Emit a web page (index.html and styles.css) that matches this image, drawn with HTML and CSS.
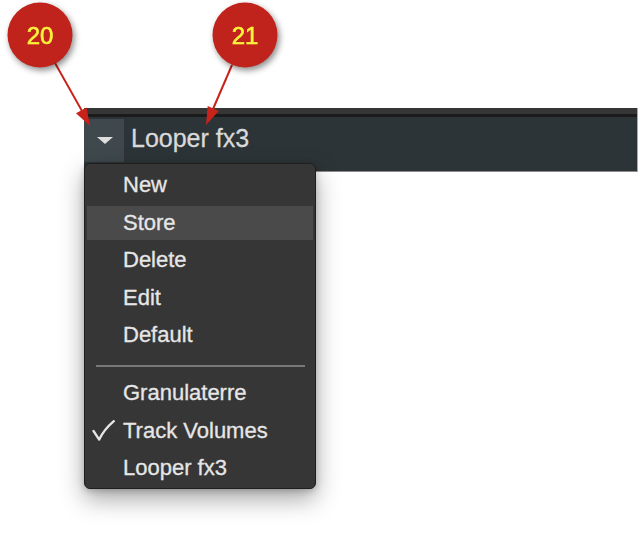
FILE: index.html
```html
<!DOCTYPE html>
<html>
<head>
<meta charset="utf-8">
<link rel="stylesheet" href="styles.css">
</head>
<body>
<div class="stage">
  <div class="bar">
    <div class="bar-top"></div>
    <div class="bar-main">
      <div class="drop-btn"><span class="tri"></span></div>
      <div class="title">Looper fx3</div>
    </div>
  </div>

  <div class="menu">
    <div class="item"><span class="check"></span>New</div>
    <div class="item active"><span class="check"></span>Store</div>
    <div class="item"><span class="check"></span>Delete</div>
    <div class="item"><span class="check"></span>Edit</div>
    <div class="item"><span class="check"></span>Default</div>
    <div class="sep"></div>
    <div class="item"><span class="check"></span>Granulaterre</div>
    <div class="item"><span class="check"><svg class="tick" width="23" height="21" viewBox="0 0 23 21"><path d="M1.5 11 L7.2 19.6 Q12 9.5 21.8 1.2" /></svg></span>Track Volumes</div>
    <div class="item"><span class="check"></span>Looper fx3</div>
  </div>

  <svg class="annot" width="640" height="546" viewBox="0 0 640 546">
    <g class="arrows">
      <line x1="55" y1="63" x2="82" y2="111" />
      <polygon points="90,126 76,113.2 86.5,107.4" />
      <line x1="232" y1="65" x2="213" y2="109" />
      <polygon points="206,125 207.7,106.1 218.7,110.9" />
    </g>
    <g class="bubble">
      <circle cx="40" cy="35" r="32.5" />
      <text x="40" y="44">20</text>
    </g>
    <g class="bubble">
      <circle cx="245" cy="35" r="32.5" />
      <text x="245" y="44">21</text>
    </g>
  </svg>
</div>
</body>
</html>
```
FILE: styles.css
```css
html, body {
  margin: 0;
  padding: 0;
  background: #ffffff;
}
body {
  font-family: "Liberation Sans", Arial, sans-serif;
}
.stage {
  position: relative;
  width: 640px;
  height: 546px;
  padding-top: 108px;
  box-sizing: border-box;
  overflow: hidden;
}
.bar {
  margin-left: 84px;
  width: 553px;
  border-right: 1px solid #a9a9a9;
}
.bar-top {
  height: 6px;
  background: #363636;
  border-bottom: 3px solid #1b1b1b;
}
.bar-main {
  height: 54px;
  background: #2d3437;
  border-bottom: 1px solid #8c8c8c;
  display: flex;
  align-items: flex-start;
}
.drop-btn {
  width: 40px;
  height: 43px;
  margin-top: 2px;
  background: #3e484d;
  display: flex;
  align-items: center;
  justify-content: center;
}
.tri {
  width: 0;
  height: 0;
  border-left: 8.5px solid transparent;
  border-right: 8.5px solid transparent;
  border-top: 7px solid #dedede;
  margin-left: 1px;
}
.title {
  margin-left: 7px;
  font-size: 25px;
  line-height: 43px;
  color: #d9d9d9;
  -webkit-text-stroke: 0.3px #d9d9d9;
}
.menu {
  position: absolute;
  left: 84px;
  top: 163px;
  width: 230px;
  background: #363636;
  border: 1px solid #1f1f1f;
  border-radius: 6px;
  padding: 4px 0 3px;
  display: flex;
  flex-direction: column;
  gap: 3.5px;
  box-shadow: 0 10px 24px rgba(0, 0, 0, 0.35), 0 2px 6px rgba(0, 0, 0, 0.2);
  z-index: 2;
}
.item {
  height: 34px;
  margin: 0 2px;
  display: flex;
  align-items: center;
  font-size: 22px;
  color: #e6e6e6;
  -webkit-text-stroke: 0.3px #e6e6e6;
}
.item.active {
  background: #4a4a4a;
}
.check {
  width: 31px;
  margin-left: 5px;
  display: flex;
  align-items: center;
}
.tick path {
  fill: none;
  stroke: #e6e6e6;
  stroke-width: 2.3;
  stroke-linecap: round;
  stroke-linejoin: round;
}
.sep {
  height: 2px;
  margin: 9.5px 10px 5.5px 11px;
  background: #777777;
}
.annot {
  position: absolute;
  left: 0;
  top: 0;
  z-index: 3;
  pointer-events: none;
}
.arrows line {
  stroke: #c8231b;
  stroke-width: 2;
}
.arrows polygon {
  fill: #c8231b;
}
.bubble {
  filter: drop-shadow(2px 3px 3px rgba(0, 0, 0, 0.45));
}
.bubble circle {
  fill: #c0231b;
}
.bubble text {
  fill: #f9f43c;
  stroke: #f9f43c;
  stroke-width: 0.6;
  font-family: "Liberation Sans", Arial, sans-serif;
  font-size: 24px;
  text-anchor: middle;
}
```
